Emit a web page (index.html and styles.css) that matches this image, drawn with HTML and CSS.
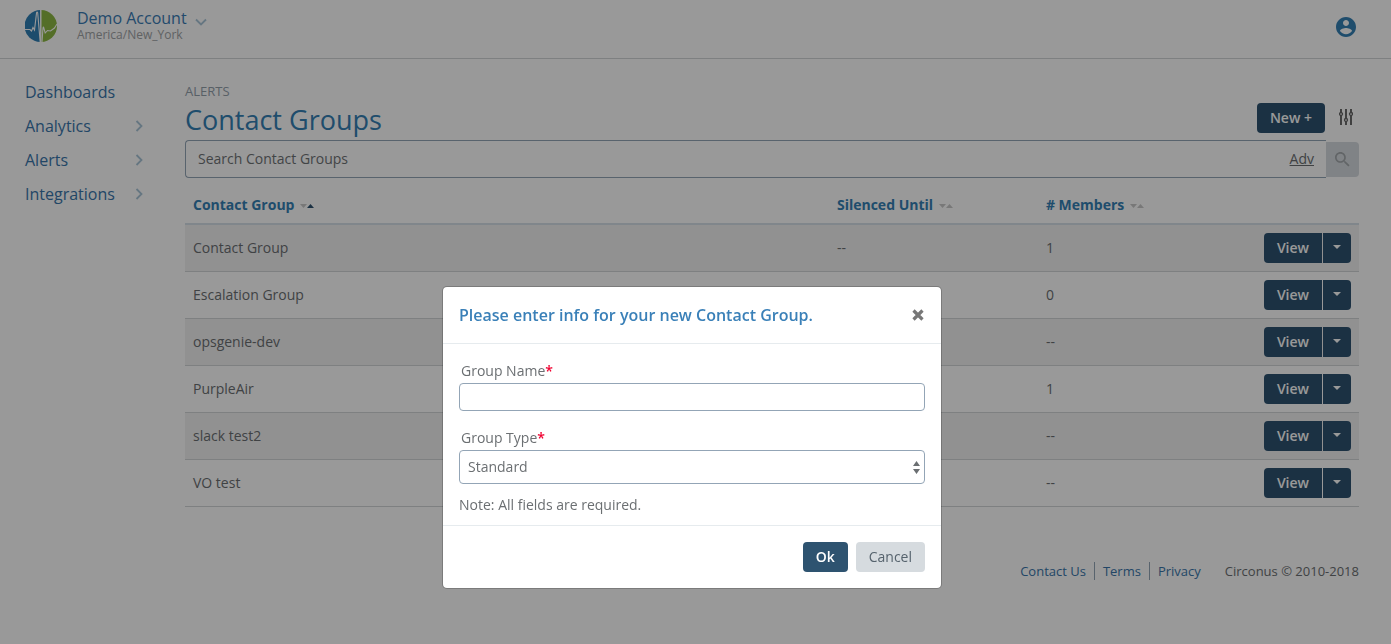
FILE: index.html
```html
<!DOCTYPE html>
<html lang="en">
<head>
<meta charset="utf-8">
<title>Contact Groups</title>
<link rel="stylesheet" href="styles.css">
</head>
<body>
<svg class="defs" aria-hidden="true">
  <symbol id="chev" viewBox="0 0 8 12"><path d="M1.500 1l5 5-5 5" fill="none" stroke="currentColor" stroke-width="1.800"/></symbol>
  <symbol id="down" viewBox="0 0 7 4"><path d="M0 0h7L3.500 4z" fill="currentColor"/></symbol>
  <symbol id="up" viewBox="0 0 7 4"><path d="M0 4h7L3.500 0z" fill="currentColor"/></symbol>
  <symbol id="caret" viewBox="0 0 8 4"><path d="M0 0h8L4 4z" fill="currentColor"/></symbol>
</svg>
<header class="topbar">
  <svg class="logo" viewBox="0 0 32 32" aria-label="Circonus">
    <path d="M15.500 0A16 16 0 0 0 15.500 32z" fill="#2f7fb5"/>
    <path d="M16 0A16 16 0 0 1 16 32z" fill="#8cb843"/>
    <path d="M0 19.500h5l1.500 1.500L8 17.500l1.500 2.500L11.500 3q.6-2 1.200 0L15.200 32" fill="none" stroke="#fff" stroke-width="1.100"/>
    <path d="M17 32l1-14q.4-2 .8 0l1.400 5 2.300-2.500 3 .5 4-3 2.500-4" fill="none" stroke="#fff" stroke-width="1.100"/>
    <path d="M15.800 0v32" stroke="#fff" stroke-width="1.400"/>
  </svg>
  <button class="account">
    <span class="account-text"><span class="account-name">Demo Account</span><span class="account-zone">America/New_York</span></span>
    <svg class="account-chev" viewBox="0 0 12 8"><path d="M1 1.500l5 5 5-5" fill="none" stroke="currentColor" stroke-width="1.800"/></svg>
  </button>
  <button class="user" aria-label="User">
    <svg viewBox="2 2 20 20" width="20" height="20"><path fill="currentColor" d="M12 2C6.480 2 2 6.480 2 12s4.480 10 10 10 10-4.480 10-10S17.520 2 12 2zm0 3c1.660 0 3 1.340 3 3s-1.340 3-3 3-3-1.340-3-3 1.340-3 3-3zm0 14.200c-2.500 0-4.710-1.280-6-3.220.030-1.990 4-3.080 6-3.080 1.990 0 5.970 1.090 6 3.080-1.290 1.940-3.500 3.220-6 3.220z"/></svg>
  </button>
</header>
<div class="shell">
  <nav class="side">
    <a href="#">Dashboards</a>
    <a href="#">Analytics<svg><use href="#chev"/></svg></a>
    <a href="#">Alerts<svg><use href="#chev"/></svg></a>
    <a href="#">Integrations<svg><use href="#chev"/></svg></a>
  </nav>
  <main class="main">
    <div class="heading">
      <div>
        <div class="crumb">ALERTS</div>
        <h1>Contact Groups</h1>
      </div>
      <div class="actions">
        <button class="btn primary">New +</button>
        <button class="tune" aria-label="Settings">
          <svg viewBox="0 0 14 16" width="14" height="16" fill="none" stroke="currentColor" stroke-width="1.900"><path d="M2 0v3M2 7v9M7 0v9M7 13v3M12 0v3M12 7v9"/><g stroke-width="1.300"><circle cx="2" cy="5" r="1.500"/><circle cx="7" cy="11" r="1.500"/><circle cx="12" cy="5" r="1.500"/></g></svg>
        </button>
      </div>
    </div>
    <form class="search">
      <div class="search-box">
        <input type="text" placeholder="Search Contact Groups" aria-label="Search Contact Groups">
        <a href="#">Adv</a>
      </div>
      <button type="button" class="search-go" aria-label="Search">
        <svg viewBox="3 3 18 18" width="15" height="15"><path fill="currentColor" d="M15.500 14h-.79l-.28-.27C15.410 12.590 16 11.110 16 9.500 16 5.910 13.090 3 9.500 3S3 5.910 3 9.500 5.910 16 9.500 16c1.610 0 3.090-.59 4.230-1.570l.27.28v.79l5 4.990L20.490 19l-4.990-5zm-6 0C7.010 14 5 11.990 5 9.500S7.010 5 9.500 5 14 7.010 14 9.500 11.990 14 9.500 14z"/></svg>
      </button>
    </form>
    <table class="groups">
      <colgroup><col class="c-name"><col class="c-until"><col class="c-members"><col></colgroup>
      <thead>
        <tr>
          <th>Contact Group<span class="sort"><svg><use href="#down"/></svg><svg class="on"><use href="#up"/></svg></span></th>
          <th>Silenced Until<span class="sort"><svg><use href="#down"/></svg><svg><use href="#up"/></svg></span></th>
          <th># Members<span class="sort"><svg><use href="#down"/></svg><svg><use href="#up"/></svg></span></th>
          <th></th>
        </tr>
      </thead>
      <tbody>
        <tr><td>Contact Group</td><td>--</td><td>1</td><td><div class="split"><button class="btn primary">View</button><button class="btn primary more" aria-label="More"><svg><use href="#caret"/></svg></button></div></td></tr>
        <tr><td>Escalation Group</td><td>--</td><td>0</td><td><div class="split"><button class="btn primary">View</button><button class="btn primary more" aria-label="More"><svg><use href="#caret"/></svg></button></div></td></tr>
        <tr><td>opsgenie-dev</td><td>--</td><td>--</td><td><div class="split"><button class="btn primary">View</button><button class="btn primary more" aria-label="More"><svg><use href="#caret"/></svg></button></div></td></tr>
        <tr><td>PurpleAir</td><td>--</td><td>1</td><td><div class="split"><button class="btn primary">View</button><button class="btn primary more" aria-label="More"><svg><use href="#caret"/></svg></button></div></td></tr>
        <tr><td>slack test2</td><td>--</td><td>--</td><td><div class="split"><button class="btn primary">View</button><button class="btn primary more" aria-label="More"><svg><use href="#caret"/></svg></button></div></td></tr>
        <tr><td>VO test</td><td>--</td><td>--</td><td><div class="split"><button class="btn primary">View</button><button class="btn primary more" aria-label="More"><svg><use href="#caret"/></svg></button></div></td></tr>
      </tbody>
    </table>
    <footer class="foot">
      <a href="#">Contact Us</a><a href="#">Terms</a><a href="#">Privacy</a>
      <span>Circonus © 2010-2018</span>
    </footer>
  </main>
</div>
<div class="overlay">
  <form class="modal" role="dialog" aria-labelledby="modal-title">
    <div class="modal-head">
      <h2 id="modal-title">Please enter info for your new Contact Group.</h2>
      <button type="button" class="close" aria-label="Close"><svg viewBox="0 0 12 12" width="12" height="12"><path d="M1.500 1.500l9 9M10.500 1.500l-9 9" stroke="currentColor" stroke-width="3.200"/></svg></button>
    </div>
    <div class="modal-body">
      <label for="group-name">Group Name<span class="req">*</span></label>
      <input id="group-name" type="text">
      <label for="group-type">Group Type<span class="req">*</span></label>
      <div class="select">
        <select id="group-type"><option>Standard</option></select>
        <svg viewBox="0 0 7 13" width="7" height="13"><path d="M0 5h7L3.500 0zM0 8h7l-3.500 5z" fill="currentColor"/></svg>
      </div>
      <p>Note: All fields are required.</p>
    </div>
    <div class="modal-foot">
      <button type="button" class="btn primary">Ok</button>
      <button type="button" class="btn plain">Cancel</button>
    </div>
  </form>
</div>
</body>
</html>
```

FILE: styles.css
```css
* { box-sizing: border-box; }
body {
  margin: 0;
  min-height: 100vh;
  background: #fff;
  color: #6b6f72;
  font: 14px/20px "Open Sans", "Noto Sans", sans-serif;
}
a { color: #3a76ab; text-decoration: none; }
button, input, select { font: inherit; color: inherit; }
button { border: 0; background: none; padding: 0; }
svg { display: block; flex: none; }
.defs { position: absolute; width: 0; height: 0; }

.topbar {
  display: flex;
  align-items: center;
  height: 59px;
  padding: 0 35px 6px 25px;
  border-bottom: 1px solid #d2d5d8;
}
.logo { width: 32px; height: 32px; }
.account { display: flex; gap: 8px; margin-left: 20px; text-align: left; }
.account-text { display: flex; flex-direction: column; }
.account-name { font-size: 16px; line-height: 18px; color: #3a7cb5; }
.account-zone { font-size: 12px; line-height: 16px; color: #a0a3a6; }
.account-chev { width: 12px; height: 8px; margin-top: 9px; color: #a9c5d8; }
.user { margin-left: auto; padding-top: 2px; color: #3580b5; }

.shell { display: flex; }
.side { width: 185px; padding: 16px 42px 0 25px; flex: none; }
.side a {
  display: flex;
  align-items: center;
  justify-content: space-between;
  height: 34px;
  font-size: 16px;
}
.side svg { width: 8px; height: 12px; color: #a9c5d8; }
.main { flex: 1; min-width: 0; padding: 23px 32px 0 0; }

.heading { display: flex; justify-content: space-between; align-items: flex-end; }
.crumb { font-size: 13px; line-height: 18px; color: #93a0ab; }
h1 { margin: 0; font-size: 27px; line-height: 40px; font-weight: 400; color: #3580b5; }
.actions { display: flex; align-items: center; gap: 14px; padding: 0 6px 7px 0; }
.tune { padding-bottom: 2px; color: #666; }

.btn { height: 30px; padding: 0 13px; border-radius: 4px; line-height: 20px; }
.primary { background: #2e5370; color: #fff; font-weight: 600; }
.plain { background: #d6dbdf; color: #56636d; }

.search { display: flex; align-items: center; }
.search-box {
  flex: 1;
  display: flex;
  align-items: center;
  height: 38px;
  padding: 0 12px;
  border: 1px solid #93a5b6;
  border-right: 0;
  border-radius: 4px 0 0 4px;
}
.search-box input { flex: 1; border: 0; padding: 0; background: none; outline: 0; }
.search-box input::placeholder { color: #6f7376; opacity: 1; }
.search-box a { color: #6b6f72; text-decoration: underline; }
.search-go {
  display: grid;
  place-items: center;
  width: 33px;
  height: 35px;
  border-radius: 0 4px 4px 0;
  background: #d6dbdf;
  color: #a3a8ac;
}

.groups { width: 100%; border-collapse: separate; border-spacing: 0; table-layout: fixed; }
.c-name { width: 54.85%; }
.c-until { width: 17.8%; }
.c-members { width: 13%; }
th { height: 47px; padding: 8px 8px 0; text-align: left; color: #3580b5; font-weight: 700; border-bottom: 2px solid #d6e0e8; }
td { height: 47px; padding: 0 8px; border-bottom: 1px solid #d2d5d8; }
tbody tr:nth-child(odd) { background: #f2f2f2; }
.sort { display: inline-flex; margin-left: 6px; vertical-align: middle; color: #c8c8c8; }
.sort svg { width: 7px; height: 4px; }
.sort .on { color: #2e5370; }
.split { display: flex; justify-content: flex-end; gap: 1px; }
.split .btn:first-child { border-radius: 4px 0 0 4px; }
.split .more { display: grid; place-items: center; width: 28px; padding: 0 0 2px; border-radius: 0 4px 4px 0; }
.more svg { width: 8px; height: 4px; }

.foot { display: flex; justify-content: flex-end; padding-top: 55px; font-size: 13px; line-height: 18px; }
.foot a + a { margin-left: 8px; padding-left: 8px; border-left: 1px solid #93a5b6; }
.foot span { margin-left: 24px; }

.overlay {
  position: fixed;
  inset: 0;
  display: flex;
  justify-content: center;
  align-items: flex-start;
  padding: 286px 7px 0 0;
  background: rgba(0, 0, 0, .4);
}
.modal {
  width: 500px;
  max-width: 100%;
  border: 1px solid rgba(0, 0, 0, .2);
  border-radius: 5px;
  background: #fff;
  background-clip: padding-box;
}
.modal-head {
  display: flex;
  justify-content: space-between;
  align-items: center;
  height: 57px;
  padding: 0 17px 0 16px;
  border-bottom: 1px solid #e6ebee;
}
h2 { margin: 0; font-size: 16px; line-height: 24px; font-weight: 600; color: #3a80b8; }
.close { color: #777; }
.modal-body { padding: 17px 16px 10px; }
.modal-body label { display: block; padding-left: 2px; margin-bottom: 2px; }
.req { color: #f00030; font-weight: 600; }
.modal-body input, .modal-body select {
  display: block;
  width: 100%;
  height: 28px;
  padding: 0 8px;
  border: 1px solid #93a5b6;
  border-radius: 4px;
  background: #fff;
}
.modal-body input { margin-bottom: 17px; }
.modal-body select { height: 34px; appearance: none; }
.select { display: grid; align-items: center; }
.select > * { grid-area: 1 / 1; }
.select svg { justify-self: end; margin-right: 5px; pointer-events: none; z-index: 1; }
.modal-body p { margin: 11px 0 0; }
.modal-foot {
  display: flex;
  justify-content: flex-end;
  gap: 8px;
  padding: 16px;
  border-top: 1px solid #e6ebee;
}
```
